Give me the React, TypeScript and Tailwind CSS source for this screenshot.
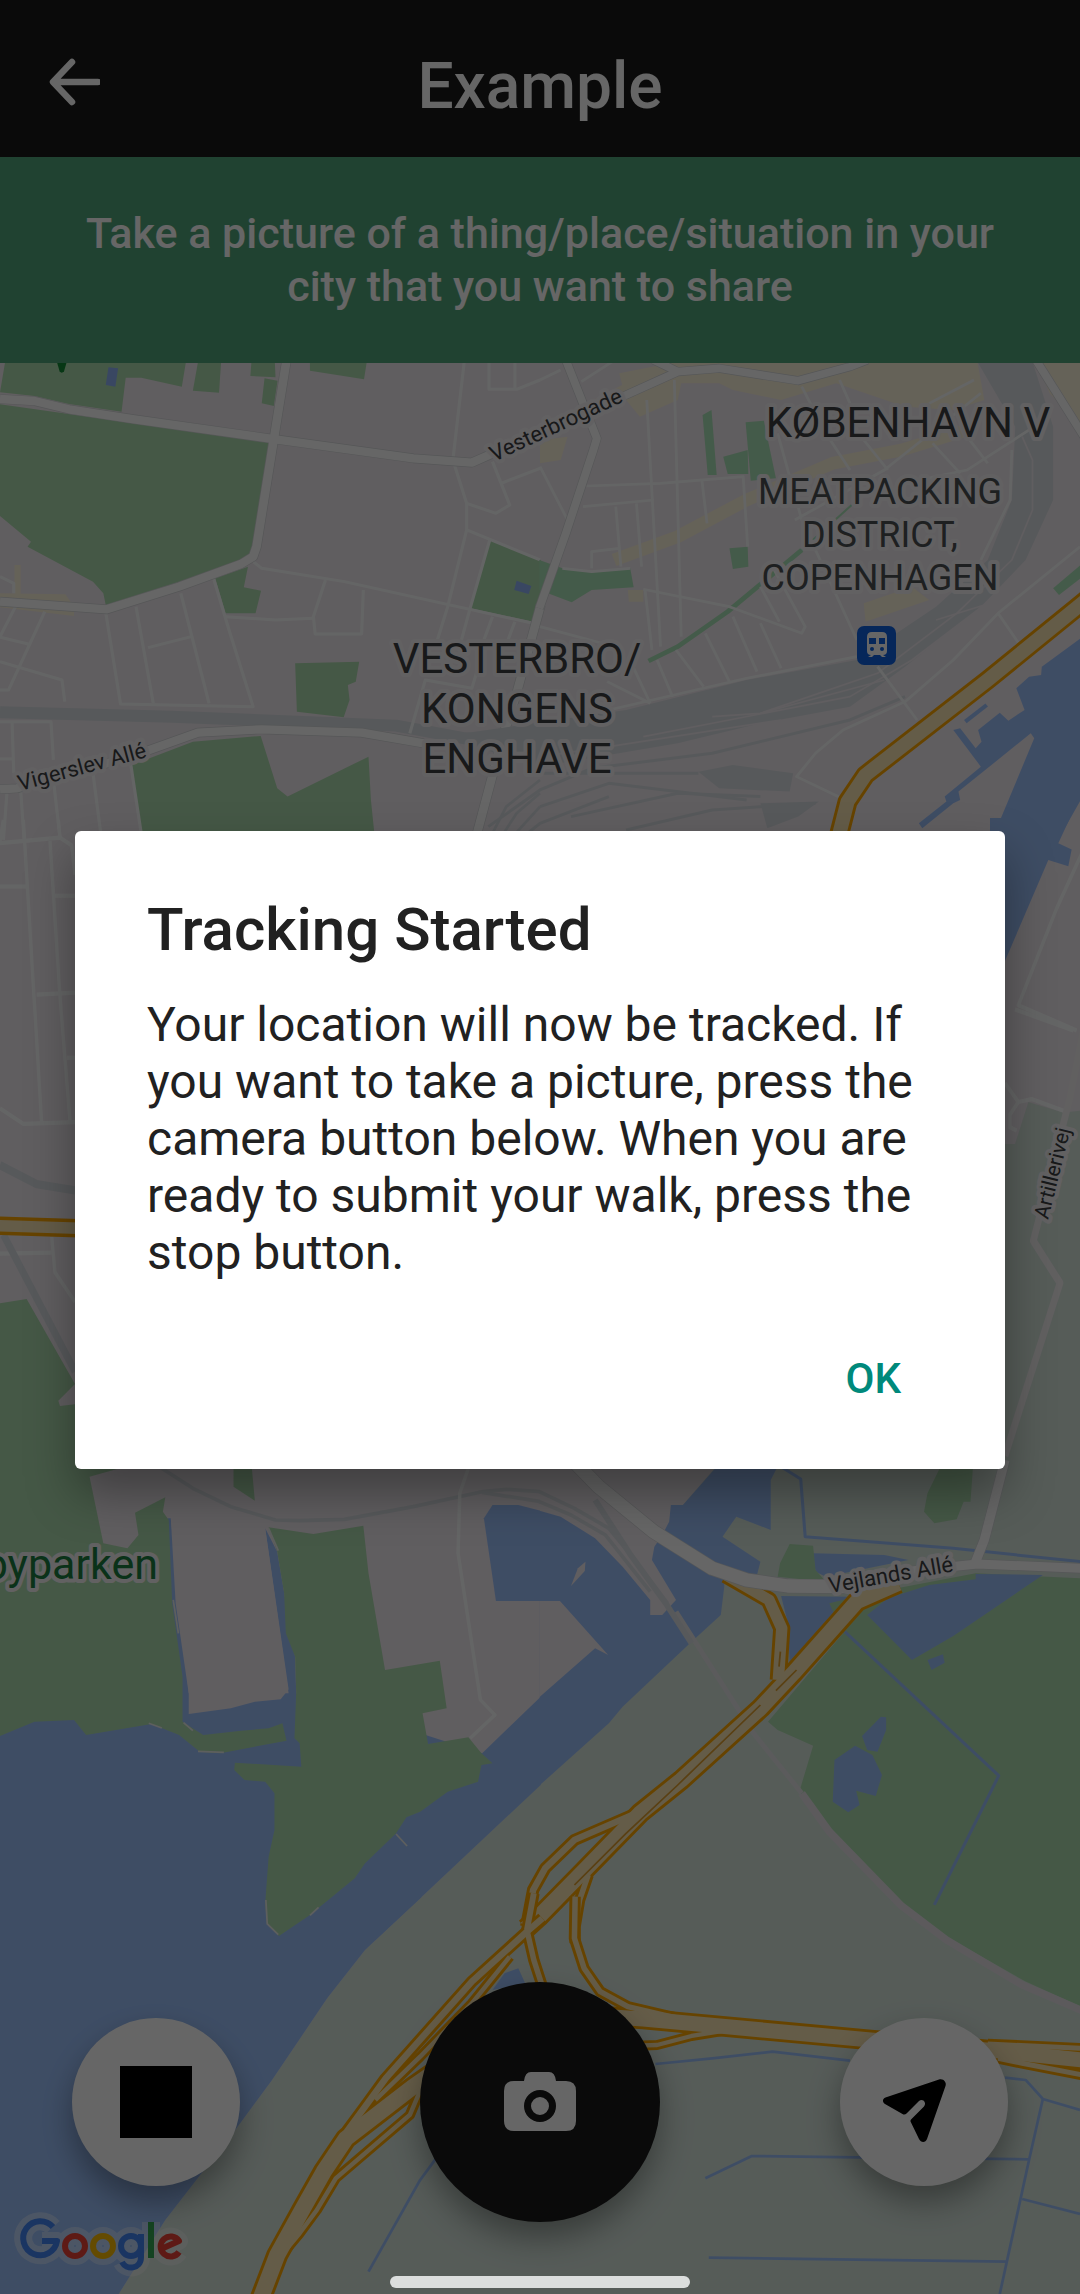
import type { ReactNode } from "react";

const LAND = "#f1eaf0";
const SAGE = "#d7e5dd";
const PARK = "#addcaf";
const CITY_PARK = "#abe3b8";
const WATER = "#9cc1fb";
const SHOP = "#fdf4dc";
const RAIL = "#d9dfe3";
const MINOR = "#fbfdfd";

type Pts = string[];

/** One map tile; shapes inside use the tile's own grid. */
function Tile({ x, y, strip = false, children }: { x: number; y: number; strip?: boolean; children: ReactNode }) {
  const scale = strip ? "scale(0.3333 0.4209)" : "scale(0.3444 0.3333)";
  return <g transform={`translate(${x} ${y}) ${scale}`}>{children}</g>;
}

function Areas({ fill, list }: { fill: string; list: Pts }) {
  return (
    <g fill={fill}>
      {list.map((p) => (
        <polygon key={p} points={p} />
      ))}
    </g>
  );
}

function Lines({ color, width, list }: { color: string; width: number; list: Pts }) {
  return (
    <g fill="none" stroke={color} strokeWidth={width} strokeLinejoin="round">
      {list.map((p) => (
        <polyline key={p} points={p} />
      ))}
    </g>
  );
}

function Streets({ width, list }: { width: number; list: Pts }) {
  return (
    <>
      <Lines color="#d5d8da" width={width + 4} list={list} />
      <Lines color="#ffffff" width={width} list={list} />
    </>
  );
}

function Highways({ roads }: { roads: [number, string][] }) {
  return (
    <g fill="none" strokeLinejoin="round">
      {roads.map(([w, p]) => (
        <polyline key={"c" + p} points={p} stroke="#ffa800" strokeWidth={w} />
      ))}
      {roads.map(([w, p]) => (
        <polyline key={"f" + p} points={p} stroke="#fbe6b4" strokeWidth={w - 17} />
      ))}
    </g>
  );
}

function Label({ x, y, size, rotate = 0, anchor = "middle", fill = "#3c4043", children }: {
  x: number; y: number; size: number; rotate?: number; anchor?: "start" | "middle" | "end"; fill?: string; children: string;
}) {
  return (
    <text
      x={x}
      y={y}
      fontSize={size}
      textAnchor={anchor}
      fill={fill}
      stroke="#f6f3f6"
      strokeWidth={8}
      strokeLinejoin="round"
      paintOrder="stroke"
      transform={rotate ? `rotate(${rotate} ${x} ${y})` : undefined}
    >
      {children}
    </text>
  );
}

function GoogleLogo() {
  const shapes = [
    ["#4285f4", "M53 2227A17 17 0 1 0 57 2241H42"],
    ["#ea4335", "M85 2246A10 10 0 1 1 65 2246A10 10 0 1 1 85 2246"],
    ["#fbbc04", "M113 2246A10 10 0 1 1 93 2246A10 10 0 1 1 113 2246"],
    ["#4285f4", "M141 2246A10 10 0 1 1 121 2246A10 10 0 1 1 141 2246M141 2234V2257C141 2270 126 2270 122 2262"],
    ["#34a853", "M151 2222V2258"],
    ["#ea4335", "M161 2249L179 2241A10 10 0 1 0 179 2252"],
  ];
  return (
    <g fill="none" strokeLinejoin="round">
      <g opacity={0.35}>
        {shapes.map(([, d]) => (
          <path key={d} d={d} stroke="#ffffff" strokeWidth={18} />
        ))}
      </g>
      {shapes.map(([c, d]) => (
        <path key={c + d} d={d} stroke={c} strokeWidth={6} />
      ))}
    </g>
  );
}

function CityMap() {
  return (
    <svg
      className="absolute inset-0 h-full w-full"
      viewBox="0 363 1080 1931"
      preserveAspectRatio="xMidYMid slice"
      fontFamily="Roboto, sans-serif"
      role="img"
      aria-label="Map of Copenhagen"
    >
      <rect x="0" y="363" width="1080" height="1931" fill={LAND} />

      {/* Southern land and water */}
      <rect x="540" y="1400" width="540" height="894" fill={SAGE} />
      <Tile x={0} y={1900}>
        <Areas fill={SAGE} list={["1700,-480 1568,-345 1215,0 1060,150 950,295 790,540 690,680 480,960 340,1190 1580,1190"]} />
        <Areas fill={WATER} list={["0,-10 1225,-10 1060,150 950,295 790,540 690,680 480,960 340,1190 0,1190"]} />
      </Tile>
      <Tile x={0} y={1460}>
        <Areas
          fill={WATER}
          list={[
            "0,760 490,760 487,175 496,175 548,700 838,700 770,205 805,275 857,590 860,700 1400,880 1570,710 1570,975 1215,1320 1090,1440 0,1440",
            "1430,135 1505,135 1570,152 1570,423 1440,423 1405,175",
          ]}
        />
        <Areas fill={LAND} list={["496,175 770,205 838,688 815,718 740,725 670,745 548,762 548,700 510,430"]} />
        <Areas
          fill={PARK}
          list={[
            "0,-200 225,-100 225,27 340,27 260,50 300,250 370,265 402,225 392,158 480,112 473,155 490,180 500,430 530,650 530,785 590,825 700,812 780,805 820,790 832,842 640,880 580,875 520,825 440,792 250,825 215,780 100,785 0,828",
            "780,202 910,222 1055,197 1070,340 1118,630 1277,602 1297,745 1227,760 1243,852 1360,832 1398,880 1430,910 1398,915 1388,965 1300,995 1220,1055 1180,1072 1150,1120 1130,1140 1060,1210 1030,1255 900,1365 810,1428 775,1390 770,1330 780,1190 797,1110 797,1000 770,965 710,960 680,930 682,908 875,920 870,850 855,835 860,700 857,590 830,520 825,400 805,275",
            "678,10 730,10 740,122 678,80",
          ]}
        />
        <Lines color="#e9edea" width={5} list={["432,790 470,804", "533,788 560,812", "1150,1122 1182,1158", "780,205 808,272", "503,420 518,520", "772,1320 776,1392 808,1424", "900,1366 925,1342", "575,874 650,877"]} />
        <Lines color={RAIL} width={11} list={["440,5 560,85 670,140 800,180 870,182 1000,178 1200,140 1400,95 1470,88 1570,95", "1400,97 1570,125"]} />
        <Lines color={MINOR} width={10} list={["1365,10 1335,100 1330,280 1395,720 1437,765 1365,835"]} />
      </Tile>
      <Tile x={540} y={1460}>
        <Areas fill={LAND} list={["0,-60 560,-60 505,27 415,135 395,420 355,465 0,480"]} />
        <Areas
          fill={WATER}
          list={[
            "-1,152 60,170 160,235 240,320 320,420 320,465 355,465 395,420 325,300 332,260 355,225 375,185 380,135 415,135 530,0 700,0 670,60 670,210 570,170 530,230 640,305 630,345 535,345 535,380 525,465 440,545 240,740 200,790 -1,976",
            "700,408 900,410 725,612 720,490",
            "793,280 1000,285 1070,300 830,350 800,335",
          ]}
        />
        <Areas fill={LAND} list={["-2,423 58,423 198,585 160,565 -2,712", "90,378 110,325 132,305 130,333"]} />
        <Areas
          fill={PARK}
          list={[
            "1168,10 1258,10 1250,125 1230,125 1210,178 1145,190 1115,155 1125,100",
            "725,252 793,257 800,330 830,365 690,350 697,310",
            "840,430 960,400 1265,340 1570,355 1570,1640 1410,1565 1180,1430 1050,1330 840,1120 753,995 793,857 690,810 662,785 880,520",
          ]}
        />
        <Areas
          fill={WATER}
          list={[
            "950,465 1010,415 1130,375 1265,358 1265,342 1460,345 1200,528 1080,600",
            "1125,600 1170,583 1175,608 1137,630",
            "990,770 1005,772 1005,810 980,875 950,870 935,828",
            "915,857 965,885 993,945 975,1008 918,992 928,1035 895,1057 850,1025 855,900",
          ]}
        />
        <Lines color={WATER} width={9} list={["885,515 1332,947 1145,1335", "700,20 757,57 770,230 1200,265 1570,305"]} />
        <Lines color="#e4e4e6" width={14} list={["395,455 620,820 760,1000"]} />
        <Lines color="#e5e2e7" width={22} list={["760,1000 840,1115 1050,1338 1180,1440 1400,1575 1580,1655"]} />
        <Lines color={RAIL} width={11} list={["-2,95 100,145 200,205 260,280 370,430", "-2,125 90,165 190,225 320,395"]} />
        <Lines color={RAIL} width={17} list={["160,120 260,280 365,430 440,550"]} />
      </Tile>

      {/* East and west strips */}
      <Tile x={0} y={820} strip>
        <Areas fill={PARK} list={["0,1148 80,1138 225,1340 175,1380 180,1392 225,1388 240,1568 0,1568"]} />
        <Lines color={MINOR} width={10} list={["10,0 0,50", "0,55 180,42 215,60 225,130", "175,0 180,42", "70,0 125,720", "150,50 180,420 210,715", "0,158 85,158", "165,180 225,180", "110,415 225,410", "200,565 225,565", "0,685 70,722 225,718", "155,990 165,1075 225,1145", "0,1030 155,1028"]} />
        <Lines color={RAIL} width={20} list={["0,820 110,865 225,880", "10,985 225,1310"]} />
        <Highways roads={[[44, "-5,964 235,970"]]} />
      </Tile>
      <Tile x={990} y={820} strip>
        <Areas fill={SAGE} list={["115,670 220,695 280,690 280,1600 0,1600 0,900 45,770 75,770"]} />
        <Areas fill={WATER} list={["0,-5 240,-5 205,55 245,70 235,110 175,95 45,335 0,400"]} />
        <Lines color={MINOR} width={10} list={["275,80 200,210 85,440 260,500", "75,450 250,500", "45,625 85,670 60,700 60,730 80,738", "85,670 125,663 225,692"]} />
        <Lines color="#f3eff1" width={20} list={["280,500 240,660 130,1000 210,1100 45,1510"]} />
      </Tile>

      {/* North-west quarter */}
      <Tile x={0} y={360}>
        <Areas fill={SHOP} list={["0,700 190,703 215,740 215,768 0,742", "42,615 60,615 60,705 42,705"]} />
        <Areas
          fill={PARK}
          list={[
            "15,5 540,5 528,80 410,53 365,53 353,155 200,132 100,108 0,97",
            "575,5 642,5 636,98 560,92",
            "730,5 798,5 800,52 727,48",
            "768,55 806,62 795,138 760,130",
            "900,5 1065,5 1057,58 900,32",
            "0,133 780,247 740,560 720,590 600,640 307,735 300,700 270,665 80,560 90,545 0,468",
            "625,655 720,620 708,682 758,692 742,760 655,760",
            "857,910 1043,905 1033,965 1010,975 1015,1020 998,1072 862,1055",
            "383,1215 560,1145 757,1128 805,1285 835,1310 1070,1190 1077,1320 1090,1450 411,1450",
            "1422,540 1570,600 1570,735 1548,785 1367,745",
          ]}
        />
        <Areas fill="#8fb2f5" list={["315,22 343,25 335,80 307,75", "1500,662 1543,678 1535,702 1493,690"]} />
        <path d="M165 5H194L186 34Q179 42 173 34Z" fill="#138a35" />
        <Lines color={RAIL} width={36} list={["0,1057 500,1070 1150,1097 1350,1135 1570,1150"]} />
        <Lines color={RAIL} width={8} list={["1420,1440 1470,1340 1568,1260", "1450,1440 1500,1360 1568,1300", "1480,1440 1568,1340"]} />
        <Lines
          color={MINOR}
          width={9}
          list={[
            "1348,5 1315,300 1355,430 1355,510 1300,740 1270,840",
            "1355,430 1440,460 1480,435 1430,305",
            "1455,370 1568,325",
            "1355,510 1568,600",
            "1422,540 1365,745 1340,840",
            "735,605 760,625 1000,665 1548,790",
            "945,660 910,770 915,822 1050,822 1055,690",
            "655,770 800,780 910,775",
            "620,655 665,810 735,1040 350,1032 305,745",
            "395,740 445,1030",
            "525,700 607,1030",
            "430,863 555,830",
            "1420,5 1420,88 1500,88 1568,60",
            "1495,5 1495,85",
            "0,650 40,670 40,700",
            "45,740 0,830",
            "0,832 85,853",
            "130,755 25,990 0,990",
            "0,905 180,960 188,1025",
            "1430,770 1405,840",
            "1495,785 1475,840",
            "1190,1120 1235,960 1370,985 1395,900",
            "0,1085 148,1085 155,1200",
            "35,1085 40,1240",
            "0,1197 40,1197",
            "20,1300 10,1440",
            "60,1290 70,1440",
            "155,1260 175,1440",
            "270,1240 295,1440",
            "380,1215 413,1440",
          ]}
        />
        <Streets
          width={25}
          list={[
            "0,117 100,123 200,148 390,178 800,238 1200,295 1370,308 1420,285 1570,216",
            "832,0 795,238 745,560 735,590 700,612 520,680 310,748 0,725",
            "1570,735 1500,1000 1460,1130 1380,1440",
            "0,1288 50,1285 380,1190 575,1118 760,1108 1050,1118 1230,1150",
          ]}
        />
      </Tile>

      {/* North-east quarter */}
      <Tile x={540} y={360}>
        <Areas
          fill={SHOP}
          list={[
            "230,40 400,5 1270,5 1290,120 1200,150 1060,140 860,70 700,120 560,90 520,70 410,70 400,120 290,170 250,120",
            "1440,5 1570,5 1570,200 1480,100",
            "940,730 1080,680 1130,720 1030,755 945,785",
            "255,690 300,690 300,725 258,725",
            "0,240 80,230 60,300 0,310",
          ]}
        />
        <Lines color={SHOP} width={38} list={["1240,210 1050,270 850,310 600,420 400,530 215,600", "0,230 120,160 250,90"]} />
        <Areas
          fill={RAIL}
          list={[
            "250,1050 600,960 920,900 1150,740 1300,600 1370,420 1380,200 1270,5 1430,5 1490,200 1490,420 1410,600 1280,740 1060,920 900,1040 640,1090 400,1150 0,1220 -220,1150 -220,1120",
            "460,1235 560,1215 735,1240 725,1295 520,1285",
            "640,1330 810,1325 750,1370 660,1405",
          ]}
        />
        <Lines color={LAND} width={5} list={["1400,230 1430,300 1430,450 1370,600 1210,760 980,940 640,1060", "1150,780 1290,735 1080,900 900,1010 300,1130", "500,1070 640,1060 1000,960", "0,1190 200,1160 700,1080"]} />
        <Lines color={RAIL} width={9} list={["0,1340 200,1270 600,1320", "90,1370 400,1300 640,1310", "250,1410 500,1350 800,1330", "-150,1400 0,1290 150,1225 500,1180 900,1080 1060,1010", "-60,1440 0,1390 200,1310", "0,1240 460,1240"]} />
        <Areas
          fill={CITY_PARK}
          list={[
            "-2,600 65,625 150,635 262,625 272,682 150,690 92,727 -2,690",
            "472,165 498,150 513,345 487,345",
            "597,187 650,182 685,355 612,362",
            "532,290 603,270 605,342 545,342",
            "550,565 603,560 605,620 560,627",
            "1490,685 1570,615 1570,655 1507,705",
          ]}
        />
        <Lines color={CITY_PARK} width={14} list={["315,903 400,860 545,755 760,570"]} />
        <Lines color={CITY_PARK} width={6} list={["760,570 905,435"]} />
        <Areas
          fill={WATER}
          list={[
            "1570,835 1457,920 1455,945 1420,950 1383,985 1407,1050 1360,1082 1335,1058 1272,1110 1282,1145 1265,1165 1220,1105 1200,1110 1280,1220 1175,1310 1180,1325 1100,1390 1110,1405 1200,1330 1220,1320 1215,1295 1425,1120 1435,1135 1310,1445 1502,1445 1570,1320",
          ]}
        />
        <Lines color={WATER} width={12} list={["1235,1085 1297,1035"]} />
        <Lines
          color={MINOR}
          width={8}
          list={[
            "0,60 60,30",
            "120,65 210,5",
            "310,120 350,860",
            "390,60 410,830",
            "135,378 350,370 590,350 603,560",
            "125,440 330,420",
            "220,440 235,620",
            "280,430 295,620",
            "150,625 150,575 230,565",
            "470,360 485,490",
            "0,320 80,480",
            "65,625 150,635 262,625",
            "300,688 550,740 760,820 770,800 680,630",
            "305,690 325,870",
            "640,680 695,785",
            "690,220 760,480 920,840",
            "760,80 830,220 900,330",
            "870,60 900,130",
            "1280,100 1000,330 740,480",
            "1130,130 1260,60",
            "1480,170 1240,330 1100,360",
            "1140,250 1220,340",
            "1240,230 1300,310",
            "940,240 1010,330",
            "980,920 1095,1080",
            "1568,560 1330,760 1200,900 1060,1025 880,1110 800,1180 745,1250 870,1312",
            "1330,760 1390,850",
            "195,965 320,1030",
            "270,920 320,1030",
            "340,900 385,1010",
            "395,870 475,980",
            "480,820 550,965",
            "560,770 630,935",
            "640,790 700,925",
            "200,1050 600,955 920,890",
            "0,800 180,850",
            "1370,270 1365,420 1280,600",
          ]}
        />
        <Streets
          width={23}
          list={["75,0 165,235 155,270 75,520 -2,745", "-2,217 120,162 250,105 400,35 520,25 750,62 900,20 950,0", "330,0 400,35", "1440,0 1580,230"]}
        />
        <Highways roads={[[58, "1600,708 1568,735 1300,960 945,1245 893,1325 862,1450"]]} />
      </Tile>

      {/* Southern roads */}
      <Tile x={540} y={1460}>
        <Highways
          roads={[
            [50, "540,345 665,420 702,505 692,660"],
            [36, "610,375 670,420"],
            [36, "290,1055 100,1140 15,1225 -20,1290 -40,1400"],
            [33, "140,1245 115,1320 102,1400 102,1450"],
            [62, "1040,370 920,425 735,640 640,745 410,960 290,1060 130,1230 -5,1372 -40,1405"],
          ]}
        />
        <Lines color="#e0a030" width={5} list={["640,735 400,975 250,1120 100,1275", "745,630 685,692", "698,575 694,620"]} />
        <Streets width={40} list={["90,-5 170,80 330,215 500,325 600,360 720,378 900,380"]} />
        <Streets width={27} list={["900,365 1100,330 1270,312 1570,325", "1350,0 1290,240 1265,305"]} />
      </Tile>
      <Tile x={540} y={1900}>
        <Lines color={WATER} width={8} list={["335,492 500,475 675,455 900,482", "1350,533 1410,540 1460,597 1568,630", "1460,597 1420,780 1335,1182", "480,835 615,768 925,772 1420,778", "1400,897 1568,942", "490,1073 1355,1085"]} />
        <Highways
          roads={[
            [33, "102,-10 100,115 128,205 175,275 255,320 360,345 460,368"],
            [30, "280,437 340,435 440,408 560,388"],
            [32, "1300,432 1568,445"],
            [32, "1330,475 1400,490 1575,525"],
            [62, "200,350 300,357 960,420 1320,452 1575,480"],
          ]}
        />
      </Tile>
      <Tile x={0} y={1900}>
        <Areas fill={WATER} list={["1465,220 1505,205 1525,250 1430,270"]} />
        <Lines color={WATER} width={8} list={["1270,770 1220,840 1070,1115"]} />
        <Highways
          roads={[
            [34, "1550,-20 1530,90"],
            [33, "1530,90 1550,180 1575,260"],
            [30, "1480,170 1370,310 1220,470 1090,600"],
            [36, "1575,55 1530,95 1370,245 1120,535 1060,620 1010,690 985,740"],
            [30, "1225,560 1190,645 975,835 920,930 870,1000 830,1050"],
            [64, "1270,510 1200,560 1005,715 940,815 880,925 805,1065 755,1200"],
          ]}
        />
      </Tile>

      <rect x="857" y="626" width="39" height="39" rx="7" fill="#1062e0" />
      <g fill="#ffffff">
        <path d="M872 632H882Q887 632 887 637V651Q887 655 883 655L886 657H882L880 655H874L872 657H868L871 655Q867 655 867 651V637Q867 632 872 632Z" />
        <g fill="#1062e0">
          <rect x="869" y="638" width="7" height="6" />
          <rect x="879" y="638" width="6" height="6" />
          <circle cx="872" cy="649" r="2" />
          <circle cx="882" cy="649" r="2" />
        </g>
      </g>

      <Label x={908} y={437} size={42}>KØBENHAVN V</Label>
      <Label x={880} y={504} size={36} fill="#4c5054">MEATPACKING</Label>
      <Label x={880} y={547} size={36} fill="#4c5054">DISTRICT,</Label>
      <Label x={880} y={590} size={36} fill="#4c5054">COPENHAGEN</Label>
      <Label x={517} y={673} size={42}>VESTERBRO/</Label>
      <Label x={517} y={723} size={42}>KONGENS</Label>
      <Label x={517} y={773} size={42}>ENGHAVE</Label>
      <Label x={20} y={791} size={22} rotate={-15} anchor="start">Vigerslev Allé</Label>
      <Label x={494} y={462} size={22} rotate={-25} anchor="start">Vesterbrogade</Label>
      <Label x={830} y={1593} size={22} rotate={-10} anchor="start">Vejlands Allé</Label>
      <Label x={1048} y={1220} size={21} rotate={-76} anchor="start">Artillerivej</Label>
      <Label x={158} y={1579} size={43} anchor="end" fill="#1a7d3f">byparken</Label>
      <GoogleLogo />
    </svg>
  );
}

function Header() {
  return (
    <header className="relative flex h-[157px] items-center justify-center bg-[#191919] pt-4 text-white">
      <button type="button" aria-label="Back" className="absolute left-12 top-14 size-13">
        <svg viewBox="0 0 52 52" fill="none" stroke="currentColor" strokeWidth="6.5" strokeLinecap="round" strokeLinejoin="round">
          <path d="M50 26H6M24 6L5 26L24 46" />
        </svg>
      </button>
      <h1 className="text-[64px] leading-none font-medium">Example</h1>
    </header>
  );
}

function MapActions() {
  return (
    <div className="absolute inset-x-0 bottom-[72px] flex items-center justify-between px-[72px]">
      <button type="button" aria-label="Stop" className="flex size-[168px] items-center justify-center rounded-full bg-white shadow-[0_16px_32px_rgba(0,0,0,0.35)]">
        <span className="size-[72px] bg-black" />
      </button>
      <button type="button" aria-label="Take a picture" className="flex size-[240px] items-center justify-center rounded-full bg-[#191919] text-white shadow-[0_16px_32px_rgba(0,0,0,0.35)]">
        <svg className="w-[72px]" viewBox="0 0 72 60" fill="currentColor">
          <path d="M27 0H45Q51 0 52 9H62Q72 9 72 19V49Q72 59 62 59H10Q0 59 0 49V19Q0 9 10 9H20Q21 0 27 0Z" />
          <circle cx="36" cy="34" r="12.5" fill="none" stroke="#191919" strokeWidth="7" />
        </svg>
      </button>
      <button type="button" aria-label="My location" className="flex size-[168px] items-center justify-center rounded-full bg-white shadow-[0_16px_32px_rgba(0,0,0,0.35)]">
        <svg className="size-20" viewBox="1 -17 80 80" overflow="visible">
          <path d="M56 0.5C60 -1 64 3 62.500 7L44 60C42.500 64 38 64 36 60L28 43.500C27 42 27.500 41 28.500 40L41 27.500C44 24 40 19 36 22L23.500 34.500C22.500 35.500 21 36 19.500 35L2 25C-1 23 -0.500 19.500 2.500 18.500Z" />
        </svg>
      </button>
    </div>
  );
}

function TrackingDialog() {
  return (
    <div className="absolute inset-0 flex items-center justify-center bg-black/60 px-[75px] pt-1.5">
      <div
        role="dialog"
        aria-modal="true"
        aria-labelledby="dialog-title"
        aria-describedby="dialog-text"
        className="w-full rounded-md bg-white px-18 pt-16 pb-9 text-[#212121] shadow-[0_24px_48px_rgba(0,0,0,0.35)]"
      >
        <h2 id="dialog-title" className="text-[60px] leading-[70px] font-medium">Tracking Started</h2>
        <p id="dialog-text" className="mt-[31px] text-[48px] leading-[57px]">
          Your location will now be tracked. If you want to take a picture, press the camera button below. When you are ready to submit your walk, press the stop button.
        </p>
        <div className="mt-11 flex justify-end">
          <button type="button" className="h-27 px-8 text-[42px] leading-none font-medium text-[#00897b]">OK</button>
        </div>
      </div>
    </div>
  );
}

export default function App() {
  return (
    <div className="relative flex min-h-screen flex-col overflow-hidden font-[Roboto,sans-serif]">
      <Header />
      <p className="bg-[#50a57a] px-16 py-[50px] text-center text-[43px] leading-[53px] font-medium text-white">
        Take a picture of a thing/place/situation in your city that you want to share
      </p>
      <main className="relative flex-1">
        <CityMap />
        <MapActions />
      </main>
      <TrackingDialog />
      <div className="absolute bottom-1.5 left-1/2 h-3 w-75 -translate-x-1/2 rounded-full bg-[#dcdedd]" />
    </div>
  );
}
